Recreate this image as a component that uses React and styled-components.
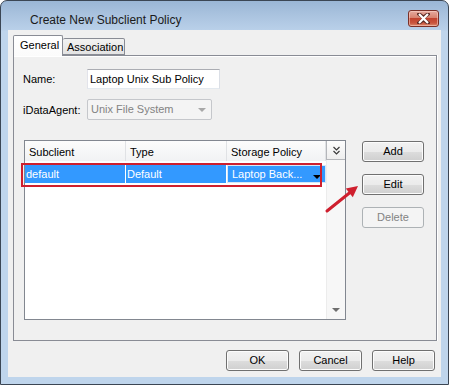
import React from 'react';
import styled, { createGlobalStyle, css } from 'styled-components';

const GlobalStyle = createGlobalStyle`
  html, body {
    margin: 0;
    padding: 0;
    background: #ffffff;
  }
  body {
    font-family: "Liberation Sans", Arial, sans-serif;
    font-size: 11px;
    color: #000;
  }
`;

const Window = styled.div`
  width: 449px;
  height: 385px;
  box-sizing: border-box;
  border: 1px solid #3b4654;
  border-radius: 7px 7px 0 0;
  padding: 0 7px 7px 7px;
  display: flex;
  flex-direction: column;
  background: linear-gradient(#9ab6d5 0px, #aac3df 14px, #b9d0e9 29px, #bfd5ec 30px, #bfd5ec 100%);
  overflow: hidden;
`;

const TitleBar = styled.div`
  height: 29px;
  display: flex;
  align-items: flex-start;
  padding-left: 22px;
`;

const Title = styled.div`
  font-size: 12px;
  line-height: 12px;
  margin-top: 13px;
  color: #1a1a1a;
`;

const CloseButton = styled.div`
  margin-left: auto;
  margin-right: 2px;
  margin-top: 9px;
  width: 31px;
  height: 17px;
  box-sizing: border-box;
  border: 1px solid #7a3028;
  border-radius: 3px;
  background: linear-gradient(#e6aa9f 0%, #d8826f 45%, #c2432f 50%, #c9553e 80%, #dc8a6e 100%);
  box-shadow: inset 0 0 0 1px rgba(255, 220, 210, 0.5);
  display: flex;
  align-items: center;
  justify-content: center;
`;

const Client = styled.div`
  flex: 1;
  background: #f0f0f0;
  display: flex;
  flex-direction: column;
  padding: 5px 5px 6px 5px;
`;

const TabStrip = styled.div`
  height: 21px;
  display: flex;
  align-items: flex-end;
  margin-bottom: -1px;
  position: relative;
  z-index: 1;
`;

const Tab = styled.div`
  box-sizing: border-box;
  border: 1px solid #898c95;
  border-radius: 2px 2px 0 0;
  padding-left: 4px;
  height: 17px;
  line-height: 16px;
  width: 62px;
  background: linear-gradient(#f2f2f2, #e3e3e3);
  ${props => props.active && css`
    height: 21px;
    width: 50px;
    line-height: 19px;
    padding-left: 6px;
    border-bottom: none;
    background: linear-gradient(#ffffff, #fbfbfb);
  `}
  ${props => !props.active && css`
    border-left: none;
    margin-bottom: 1px;
  `}
`;

const Panel = styled.div`
  height: 286px;
  box-sizing: border-box;
  border: 1px solid #898c95;
  background: #f0f0f0;
  box-shadow: inset 0 1px 0 #ffffff, 1px 0 0 #ffffff;
  padding: 13px 11px 0 9px;
  width: 424px;
`;

const FormRow = styled.div`
  display: flex;
  align-items: center;
  margin-bottom: ${props => props.gap || 0}px;
`;

const Label = styled.div`
  width: 64px;
`;

const TextBox = styled.div`
  width: 133px;
  height: 20px;
  box-sizing: border-box;
  border: 1px solid #abadb3;
  border-right-color: #dbdfe6;
  border-bottom-color: #e3e9ef;
  border-left-color: #e2e3ea;
  background: #fff;
  padding-left: 2px;
  line-height: 18px;
`;

const Combo = styled.div`
  width: 125px;
  height: 21px;
  box-sizing: border-box;
  border: 1px solid #c5c7cb;
  border-radius: 2px;
  background: #f4f4f4;
  color: #838383;
  padding-left: 3px;
  line-height: 19px;
  display: flex;
  align-items: center;
  justify-content: space-between;
`;

const ComboArrow = styled.div`
  width: 0;
  height: 0;
  border-left: 4px solid transparent;
  border-right: 4px solid transparent;
  border-top: 4px solid #a8a8a8;
  margin-right: 5px;
`;

const ListRow = styled.div`
  display: flex;
  align-items: flex-start;
  gap: 16px;
  margin-top: 20px;
  margin-left: 1px;
  position: relative;
`;

const Table = styled.div`
  width: 322px;
  height: 180px;
  box-sizing: border-box;
  border: 1px solid #828790;
  background: #fff;
  display: flex;
  position: relative;
`;

const TableMain = styled.div`
  flex: 1;
  display: flex;
  flex-direction: column;
`;

const HeaderRow = styled.div`
  display: flex;
  height: 20px;
  background: linear-gradient(#fcfcfc, #f1f2f4);
`;

const HeaderCell = styled.div`
  width: ${props => props.w}px;
  box-sizing: border-box;
  padding-left: 4px;
  line-height: 23px;
  border-right: 1px solid #e0e2e5;
`;

const Body = styled.div`
  padding-top: 4px;
`;

const DataRow = styled.div`
  display: flex;
  height: 18px;
  background: #3399ff;
  color: #fff;
`;

const Cell = styled.div`
  width: ${props => props.w}px;
  box-sizing: border-box;
  padding-left: 1px;
  line-height: 18px;
  border-right: 1px solid #ffffff;
`;

const EditorCell = styled.div`
  flex: 1;
  box-sizing: border-box;
  border: 1px solid #d6e6f7;
  background: #3399ff;
  display: flex;
  align-items: center;
  justify-content: space-between;
  padding-left: 4px;
  line-height: 16px;
`;

const CellArrow = styled.div`
  width: 0;
  height: 0;
  border-left: 4px solid transparent;
  border-right: 4px solid transparent;
  border-top: 4px solid #000;
  margin-right: 4px;
  margin-top: 6px;
`;

const ScrollStrip = styled.div`
  width: 18px;
  display: flex;
  flex-direction: column;
  background: #f7f7f7;
  border-left: 1px solid #ececec;
`;

const ScrollHead = styled.div`
  height: 19px;
  box-sizing: border-box;
  border-left: 1px solid #b4b6ba;
  border-bottom: 1px solid #b4b6ba;
  background: linear-gradient(#fdfdfd, #eeeeee);
  margin-left: -1px;
  display: flex;
  align-items: center;
  justify-content: center;
`;

const ScrollDown = styled.div`
  margin-top: auto;
  margin-bottom: 7px;
  align-self: center;
  width: 0;
  height: 0;
  border-left: 4px solid transparent;
  border-right: 4px solid transparent;
  border-top: 4px solid #6e6e6e;
`;

const Highlight = styled.div`
  position: absolute;
  left: -4px;
  top: 22px;
  width: 301px;
  height: 24px;
  box-sizing: border-box;
  border: 2px solid #cf1f2e;
  pointer-events: none;
`;

const ArrowMark = styled.svg`
  position: absolute;
  left: 296px;
  top: 39px;
`;

const ButtonColumn = styled.div`
  display: flex;
  flex-direction: column;
  gap: 12px;
  margin-top: 1px;
`;

const Button = styled.div`
  width: ${props => props.w || 62}px;
  height: 21px;
  box-sizing: border-box;
  border: 1px solid #707070;
  border-radius: 3px;
  background: linear-gradient(#f2f2f2 0%, #ebebeb 50%, #dddddd 51%, #cfcfcf 100%);
  box-shadow: inset 0 0 0 1px #fcfcfc;
  text-align: center;
  line-height: 19px;
  ${props => props.disabled && css`
    border-color: #adb2b5;
    background: #f4f4f4;
    box-shadow: none;
    color: #838383;
  `}
`;

const ButtonBar = styled.div`
  display: flex;
  justify-content: flex-end;
  gap: 10px;
  margin-top: 9px;
  margin-right: 1px;
`;

export default function App() {
  return (
    <>
      <GlobalStyle />
      <Window>
        <TitleBar>
          <Title>Create New Subclient Policy</Title>
          <CloseButton>
            <svg width="13" height="11" viewBox="0 0 13 11">
              <path
                d="M2 1 L6.5 4.5 L11 1 M2 10 L6.5 6.5 L11 10"
                stroke="#5a2a24"
                strokeWidth="3.6"
                fill="none"
                strokeLinecap="square"
              />
              <path
                d="M2 1 L11 10 M11 1 L2 10"
                stroke="#ffffff"
                strokeWidth="2.2"
                fill="none"
              />
            </svg>
          </CloseButton>
        </TitleBar>
        <Client>
          <TabStrip>
            <Tab active>General</Tab>
            <Tab>Association</Tab>
          </TabStrip>
          <Panel>
            <FormRow gap={10}>
              <Label>Name:</Label>
              <TextBox>Laptop Unix Sub Policy</TextBox>
            </FormRow>
            <FormRow>
              <Label>iDataAgent:</Label>
              <Combo>
                Unix File System
                <ComboArrow />
              </Combo>
            </FormRow>
            <ListRow>
              <Table>
                <TableMain>
                  <HeaderRow>
                    <HeaderCell w={101}>Subclient</HeaderCell>
                    <HeaderCell w={101}>Type</HeaderCell>
                    <HeaderCell w={99}>Storage Policy</HeaderCell>
                  </HeaderRow>
                  <Body>
                    <DataRow>
                      <Cell w={101}>default</Cell>
                      <Cell w={101}>Default</Cell>
                      <EditorCell>
                        Laptop Back...
                        <CellArrow />
                      </EditorCell>
                    </DataRow>
                  </Body>
                </TableMain>
                <ScrollStrip>
                  <ScrollHead>
                    <svg width="9" height="9" viewBox="0 0 9 9">
                      <path d="M1.5 1 L4.5 4 L7.5 1 M1.5 5 L4.5 8 L7.5 5" stroke="#3a3a3a" strokeWidth="1.2" fill="none" />
                    </svg>
                  </ScrollHead>
                  <ScrollDown />
                </ScrollStrip>
                <Highlight />
              </Table>
              <ButtonColumn>
                <Button>Add</Button>
                <Button>Edit</Button>
                <Button disabled>Delete</Button>
              </ButtonColumn>
              <ArrowMark width="45" height="38" viewBox="0 0 45 38">
                <line x1="7" y1="32" x2="30" y2="13.5" stroke="#cf1f2e" strokeWidth="3" strokeLinecap="round" />
                <polygon points="38,7 32.8,18.2 25.8,9.6" fill="#cf1f2e" />
              </ArrowMark>
            </ListRow>
          </Panel>
          <ButtonBar>
            <Button w={63}>OK</Button>
            <Button w={63}>Cancel</Button>
            <Button w={63}>Help</Button>
          </ButtonBar>
        </Client>
      </Window>
    </>
  );
}
